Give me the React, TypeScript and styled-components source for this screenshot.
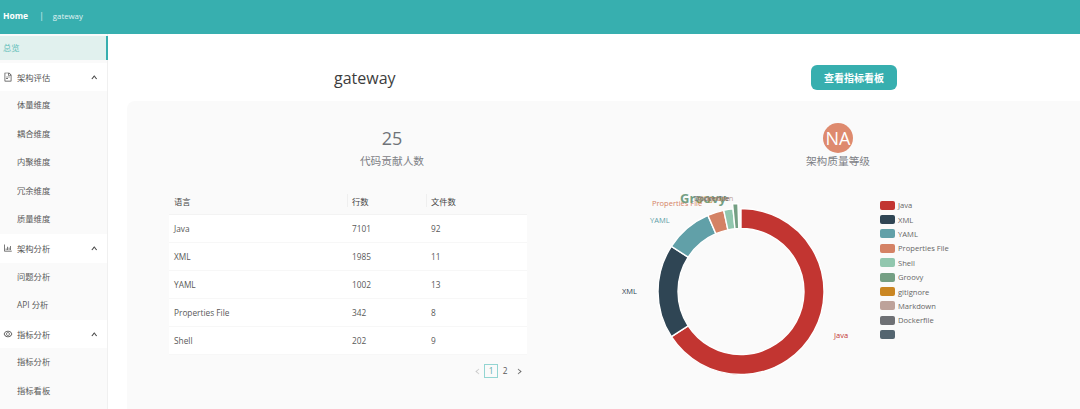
import React from 'react'
import styled, { createGlobalStyle } from 'styled-components'
import { AiOutlineFileText, AiOutlineBarChart, AiOutlineEye, AiOutlineUp, AiOutlineLeft, AiOutlineRight } from 'react-icons/ai'

const FONT = `"Open Sans", "Noto Sans CJK SC", sans-serif`

const slices = [
  { name: 'Java', color: '#c23531' },
  { name: 'XML', color: '#2f4554' },
  { name: 'YAML', color: '#61a0a8' },
  { name: 'Properties File', color: '#d48265' },
  { name: 'Shell', color: '#91c7ae' },
  { name: 'Groovy', color: '#749f83' },
  { name: 'gitignore', color: '#ca8622' },
  { name: 'Markdown', color: '#bda29a' },
  { name: 'Dockerfile', color: '#6e7074' },
  { name: '', color: '#546570' },
]

const rows = [
  ['Java', '7101', '92'],
  ['XML', '1985', '11'],
  ['YAML', '1002', '13'],
  ['Properties File', '342', '8'],
  ['Shell', '202', '9'],
]

const menu = [
  { title: '架构评估', icon: <AiOutlineFileText />, children: ['体量维度', '耦合维度', '内聚维度', '冗余维度', '质量维度'] },
  { title: '架构分析', icon: <AiOutlineBarChart />, children: ['问题分析', 'API 分析'] },
  { title: '指标分析', icon: <AiOutlineEye />, children: ['指标分析', '指标看板'] },
]

const CX = 121
const CY = 106.5

const polar = (r: number, deg: number) => {
  const a = ((deg - 90) * Math.PI) / 180
  return `${(CX + r * Math.cos(a)).toFixed(2)} ${(CY + r * Math.sin(a)).toFixed(2)}`
}

const arc = (r0: number, r1: number, from: number, to: number) => {
  const large = to - from > 180 ? 1 : 0
  return `M${polar(r1, from)}A${r1} ${r1} 0 ${large} 1 ${polar(r1, to)}L${polar(r0, to)}A${r0} ${r0} 0 ${large} 0 ${polar(r0, from)}Z`
}

// start and end angle of each visible slice, clockwise from 12 o'clock
const angles = [
  [0, 237],
  [237, 303],
  [303, 336.5],
  [336.5, 348],
  [348, 354.5],
  [354.5, 358],
]

const DonutChart = () => (
  <ChartSvg width={260} height={222} viewBox="0 0 260 222">
    {angles.map(([from, to], i) => (
      <path
        key={slices[i].name}
        d={arc(63, slices[i].name === 'Groovy' ? 88 : 83, from, to)}
        fill={slices[i].color}
        stroke="#fff"
        strokeWidth={1.4}
      />
    ))}
    <ChartLabel x={214} y={153} fill="#c23531">Java</ChartLabel>
    <ChartLabel x={2} y={109} fill="#2f4554">XML</ChartLabel>
    <ChartLabel x={30} y={38} fill="#61a0a8">YAML</ChartLabel>
    <ChartLabel x={32} y={21} fill="#d48265">Properties File</ChartLabel>
    <FocusLabel x={60} y={18} fill="#749f83">Groovy</FocusLabel>
    <ChartLabel x={78} y={16} fill="#ca8622">gitignore</ChartLabel>
    <ChartLabel x={76} y={16} fill="#bda29a">Markdown</ChartLabel>
    <ChartLabel x={74} y={16} fill="#6e7074">Dockerfile</ChartLabel>
  </ChartSvg>
)

const App: React.FC = () => (
  <Page>
    <GlobalStyle />
    <Header>
      <HomeLink>Home</HomeLink>
      <Divider>|</Divider>
      <Crumb>gateway</Crumb>
    </Header>
    <Body>
      <Sidebar>
        <ActiveItem>总览</ActiveItem>
        {menu.map((group) => (
          <React.Fragment key={group.title}>
            <GroupItem>
              <GroupIcon>{group.icon}</GroupIcon>
              <span>{group.title}</span>
              <Caret><AiOutlineUp /></Caret>
            </GroupItem>
            {group.children.map((child) => (
              <SubItem key={child}>{child}</SubItem>
            ))}
          </React.Fragment>
        ))}
      </Sidebar>
      <Main>
        <TitleRow>
          <Title>gateway</Title>
          <PrimaryButton>查看指标看板</PrimaryButton>
        </TitleRow>
        <Panel>
          <StatsRow>
            <Stat>
              <StatValue>25</StatValue>
              <StatCaption>代码贡献人数</StatCaption>
            </Stat>
            <Stat>
              <GradeBadge>NA</GradeBadge>
              <StatCaption>架构质量等级</StatCaption>
            </Stat>
          </StatsRow>
          <ContentRow>
            <TableBlock>
              <Table>
                <thead>
                  <tr>
                    <HeadCell>语言</HeadCell>
                    <HeadCell>行数</HeadCell>
                    <HeadCell>文件数</HeadCell>
                  </tr>
                </thead>
                <tbody>
                  {rows.map((row) => (
                    <tr key={row[0]}>
                      {row.map((cell, i) => (
                        <Cell key={i}>{cell}</Cell>
                      ))}
                    </tr>
                  ))}
                </tbody>
              </Table>
              <Pagination>
                <PageArrow $disabled><AiOutlineLeft /></PageArrow>
                <PageNumber $active>1</PageNumber>
                <PageNumber>2</PageNumber>
                <PageArrow><AiOutlineRight /></PageArrow>
              </Pagination>
            </TableBlock>
            <DonutChart />
            <Legend>
              {slices.map((s) => (
                <LegendItem key={s.color}>
                  <Swatch $color={s.color} />
                  {s.name}
                </LegendItem>
              ))}
            </Legend>
          </ContentRow>
        </Panel>
      </Main>
    </Body>
  </Page>
)

export default App

const GlobalStyle = createGlobalStyle`
  html, body {
    margin: 0;
    padding: 0;
    background: #fff;
  }
`

const Page = styled.div`
  width: 1080px;
  height: 409px;
  overflow: hidden;
  font-family: ${FONT};
  color: #595959;
`

const Header = styled.header`
  height: 34px;
  background: #37afaf;
  display: flex;
  align-items: center;
  padding-left: 3px;
  padding-bottom: 3px;
  box-sizing: border-box;
  color: #fff;
  font-size: 8.5px;
`

const HomeLink = styled.span`
  font-weight: 700;
`

const Divider = styled.span`
  margin: 0 9px 0 11px;
  opacity: 0.8;
`

const Crumb = styled.span`
  font-size: 7.8px;
  opacity: 0.85;
`

const Body = styled.div`
  display: flex;
`

const Sidebar = styled.nav`
  width: 108px;
  flex-shrink: 0;
  background: #fafafa;
  border-right: 1px solid #f0f0f0;
  box-sizing: border-box;
  padding-top: 2px;
  font-size: 8.3px;
`

const ActiveItem = styled.div`
  height: 24px;
  line-height: 24px;
  padding-left: 3px;
  margin: 0 -1px 2.5px 0;
  background: #e1f1ee;
  color: #5fbdb8;
  border-right: 2px solid #37afaf;
`

const GroupItem = styled.div`
  height: 28.6px;
  background: #fff;
  display: flex;
  align-items: center;
  padding: 0 10px 0 3px;
  color: #555;
`

const GroupIcon = styled.span`
  width: 14px;
  display: flex;
  font-size: 10px;
  color: #444;
`

const Caret = styled.span`
  margin-left: auto;
  display: flex;
  font-size: 6.5px;
  color: #333;

  svg {
    stroke-width: 70px;
  }
`

const SubItem = styled.div`
  height: 28.6px;
  line-height: 28.6px;
  padding-left: 17px;
  color: #595959;
`

const Main = styled.main`
  flex: 1;
  min-width: 0;
`

const TitleRow = styled.div`
  height: 67px;
  display: flex;
  align-items: flex-start;
  justify-content: space-between;
  padding: 31px 183px 0 226px;
  box-sizing: border-box;
`

const Title = styled.h1`
  margin: 2px 0 0;
  font-size: 16px;
  line-height: 22px;
  font-weight: 500;
  color: #3d3d3d;
`

const PrimaryButton = styled.button`
  width: 86px;
  height: 25px;
  border: 0;
  border-radius: 6px;
  background: #37afaf;
  color: #fff;
  font-family: inherit;
  font-size: 10px;
  font-weight: 700;
`

const Panel = styled.section`
  margin-left: 19px;
  height: 320px;
  padding-top: 22px;
  box-sizing: border-box;
  background: #fafafa;
  border-radius: 8px 0 0 0;
`

const StatsRow = styled.div`
  display: grid;
  grid-template-columns: 530px 362px;
`

const Stat = styled.div`
  display: flex;
  flex-direction: column;
  align-items: center;
`

const StatValue = styled.div`
  height: 30px;
  line-height: 30px;
  font-size: 18px;
  color: #6f7378;
`

const GradeBadge = styled.div`
  width: 30px;
  height: 30px;
  line-height: 30px;
  border-radius: 50%;
  text-align: center;
  background: #de8a6e;
  color: #fff;
  font-size: 18px;
`

const StatCaption = styled.div`
  font-size: 10.7px;
  line-height: 16px;
  color: #7d8085;
`

const ContentRow = styled.div`
  display: flex;
  margin-top: 18px;
`

const TableBlock = styled.div`
  margin-left: 42px;
  width: 358px;
  flex-shrink: 0;
`

const Table = styled.table`
  width: 100%;
  border-collapse: separate;
  border-spacing: 0;
  table-layout: fixed;
  font-size: 8.3px;

  th:nth-child(1), td:nth-child(1) { width: 178px; }
  th:nth-child(2), td:nth-child(2) { width: 79px; }
`

const HeadCell = styled.th`
  position: relative;
  height: 28px;
  padding: 0 5px;
  text-align: left;
  font-weight: 400;
  color: #444;
  border-bottom: 1px solid #f3f3f3;
  background: #fafafa;
  box-sizing: border-box;

  & + &::before {
    content: '';
    position: absolute;
    left: 0;
    top: 7px;
    height: 13px;
    width: 1px;
    background: #efefef;
  }
`

const Cell = styled.td`
  height: 28px;
  padding: 0 5px;
  background: #fff;
  color: #595959;
  border-bottom: 1px solid #f7f7f7;
  box-sizing: border-box;
`

const Pagination = styled.div`
  display: flex;
  justify-content: flex-end;
  align-items: center;
  margin: 9px 1px 0 0;
  font-size: 8.3px;
`

const PageArrow = styled.span<{ $disabled?: boolean }>`
  width: 14px;
  display: flex;
  justify-content: center;
  font-size: 7px;
  color: ${({ $disabled }) => ($disabled ? '#c4c4c4' : '#555')};

  svg {
    stroke-width: 40px;
  }
`

const PageNumber = styled.span<{ $active?: boolean }>`
  width: 14px;
  height: 14px;
  line-height: 12px;
  text-align: center;
  box-sizing: border-box;
  border: 1px solid ${({ $active }) => ($active ? '#93d5d2' : 'transparent')};
  color: ${({ $active }) => ($active ? '#5fa9a7' : '#595959')};
`

const ChartSvg = styled.svg`
  flex-shrink: 0;
  margin-left: 93px;
  margin-top: -2px;
`

const ChartLabel = styled.text`
  font-family: ${FONT};
  font-size: 7.5px;
`

const FocusLabel = styled.text`
  font-family: ${FONT};
  font-size: 13px;
  font-weight: 700;
`

const Legend = styled.div`
  display: flex;
  flex-direction: column;
  margin-top: 11px;
`

const LegendItem = styled.div`
  height: 14.4px;
  display: flex;
  align-items: center;
  gap: 3px;
  font-size: 7.6px;
  color: #666;
`

const Swatch = styled.span<{ $color: string }>`
  width: 15px;
  height: 9px;
  border-radius: 2px;
  background: ${({ $color }) => $color};
`
